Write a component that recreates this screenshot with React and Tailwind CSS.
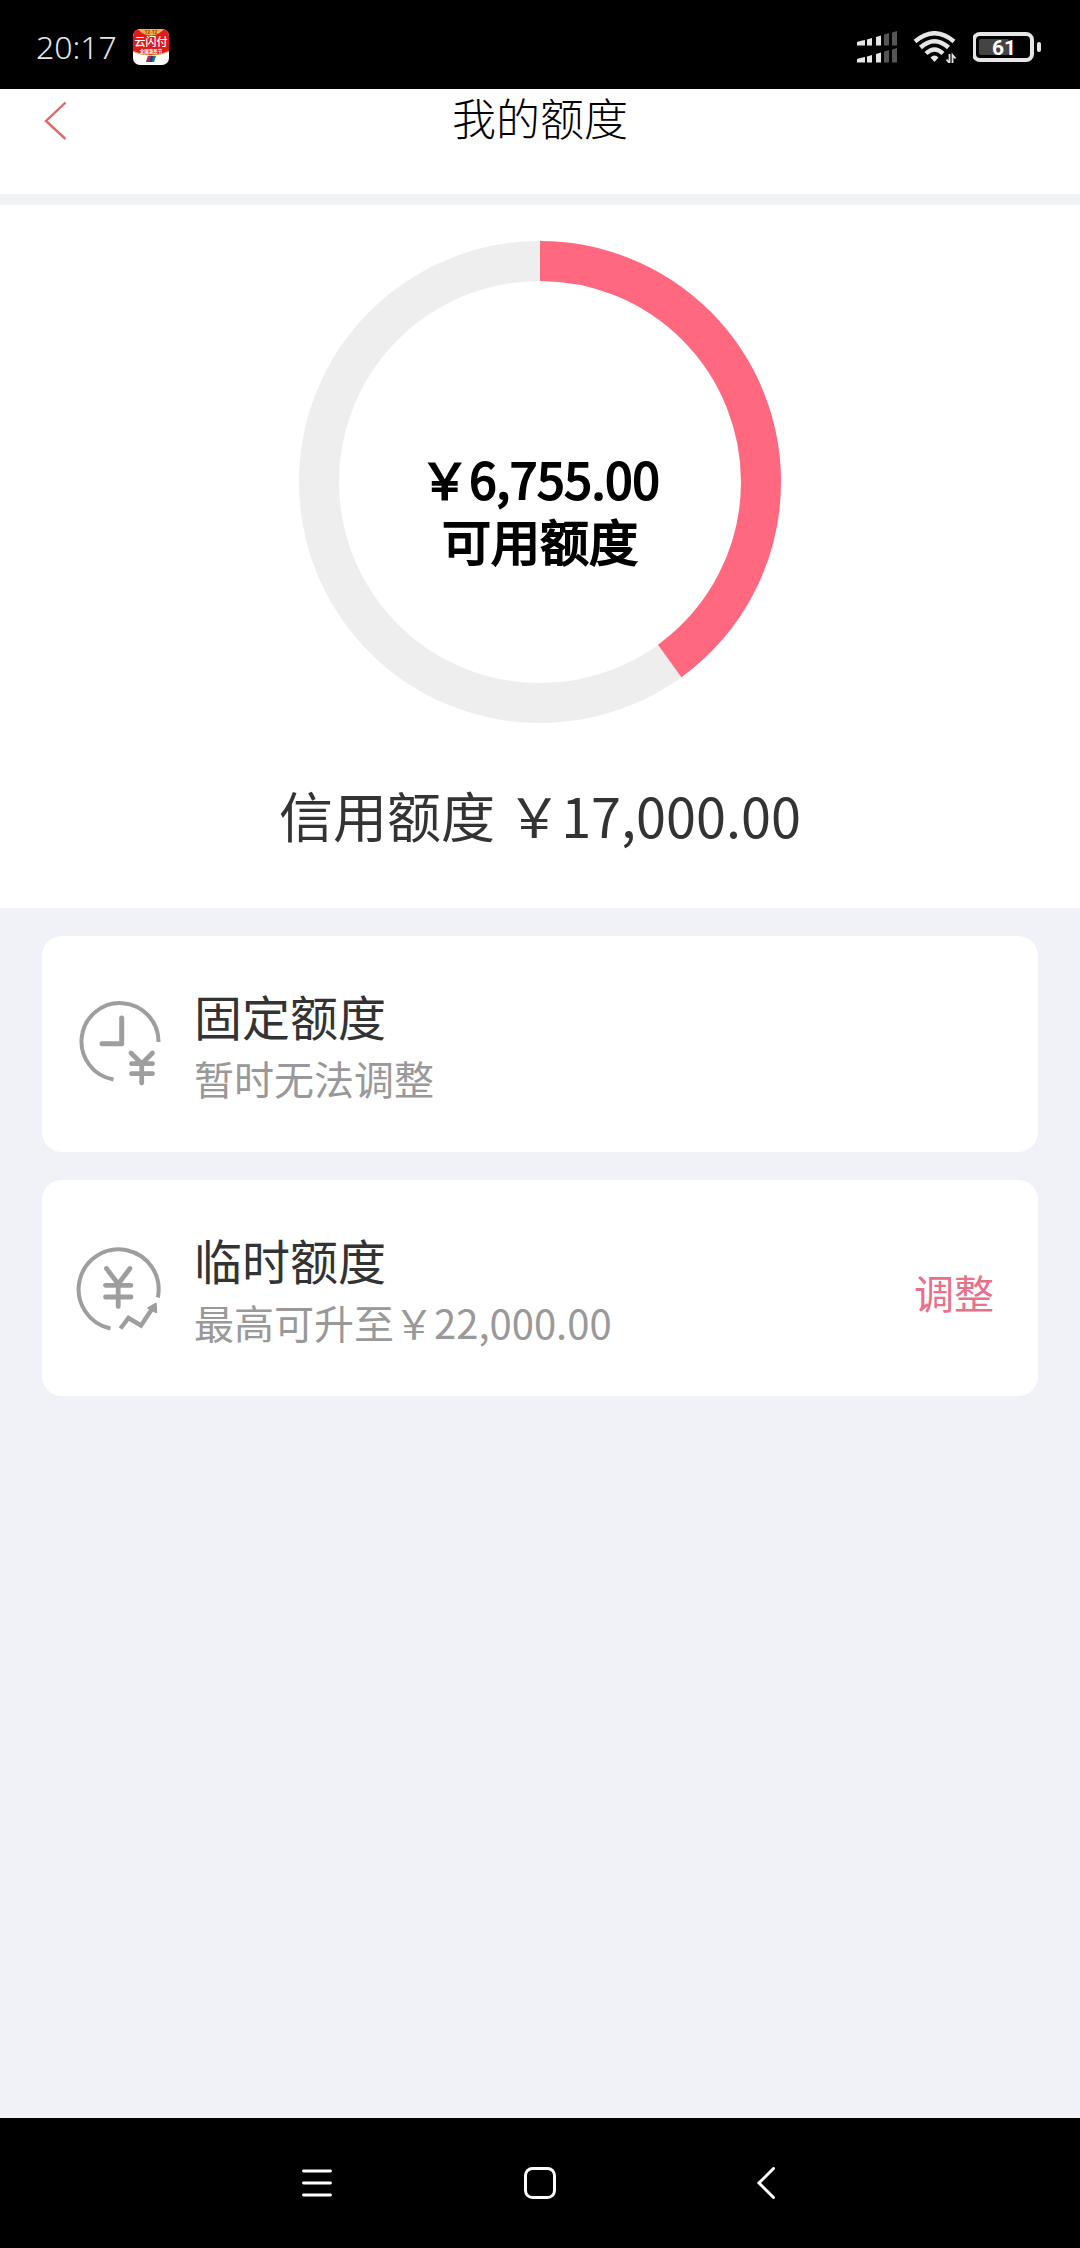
import React from "react";

const USED_SHARE = 0.4;
const RADIUS = 221;
const LENGTH = 2 * Math.PI * RADIUS;

const StatusBar = () => (
  <div className="flex h-[89px] items-center justify-between bg-black pt-1 pr-[37px] pl-9 text-[#e6e6e6]">
    <div className="flex items-center gap-4">
      <span className="font-['Noto_Sans',sans-serif] text-[32px] leading-9 font-light">20:17</span>
      <svg className="size-9" viewBox="0 0 36 36" role="img" aria-label="云闪付">
        <clipPath id="appClip">
          <rect width="36" height="36" rx="7" />
        </clipPath>
        <g clipPath="url(#appClip)">
          <rect width="36" height="36" fill="#fff" />
          <path d="M0 0h36v22q-18 8-36 0z" fill="#e01b1b" />
          <path d="M5 0h26q-5 6-13 6.500Q9 6 5 0z" fill="#f5b04a" />
          <path d="M0 22.500q18 7.500 36 0" fill="none" stroke="#d9a441" strokeWidth="1" />
          <path d="M15 27h8l-2 6h-8z" fill="#0b7f86" />
          <path d="M15 27h3l-2 6h-3z" fill="#c4274a" />
          <path d="M18 27h2.500l-2 6H16z" fill="#23407c" />
          <text x="18" y="5" textAnchor="middle" fontSize="5" fontWeight="700" fill="#8a3a10" fontFamily="Roboto, sans-serif">12·12</text>
          <text x="18" y="17" textAnchor="middle" fontSize="11" fontWeight="500" fill="#fff" fontFamily="Noto Sans CJK SC, sans-serif">云闪付</text>
          <text x="18" y="23.500" textAnchor="middle" fontSize="4.500" fontWeight="700" fill="#fff" fontFamily="Noto Sans CJK SC, sans-serif">全国惠民节</text>
        </g>
      </svg>
    </div>
    <div className="flex items-center gap-4">
      <svg className="h-8 w-10" viewBox="0 0 40 32" role="img" aria-label="信号">
        <g fill="#e6e6e6">
          <path d="M0 11q4-1.500 8-2v5.500H0zM10 8.500l5-1.500v7.500h-5zM19 6l5-1.500v10h-5z" />
          <path d="M0 28q4-1.500 8-2v5.500H0zM10 25.500l5-1.500v7.500h-5zM19 23l5-1.500v10h-5z" />
        </g>
        <g fill="#555">
          <path d="M27 3.500l5-1.500v12.500h-5zM35 1.500L40 0v14.500h-5z" />
          <path d="M27 20.500l5-1.500v12.500h-5zM35 18.500l5-1.500v14.500h-5z" />
        </g>
      </svg>
      <svg className="h-8 w-11" viewBox="0 0 44 32" role="img" aria-label="Wi-Fi">
        <g fill="none" stroke="#e6e6e6" strokeWidth="4.400">
          <path d="M2 10.500Q21.500 -6 41 10.500" />
          <path d="M7.500 16.500Q21.500 4 35.500 16.500" />
          <path d="M13 22.500Q21.500 14.500 30 22.500" />
        </g>
        <path d="M17.500 26.500q4-4 8 0l-4 4.500z" fill="#e6e6e6" />
        <path d="M36.500 23v9l-3-3.500M39.500 33v-9l3 3.500" fill="none" stroke="#e6e6e6" strokeWidth="1.800" />
      </svg>
      <svg className="h-8 w-[70px]" viewBox="0 0 70 32" role="img" aria-label="61%">
        <rect x="1" y="3" width="58" height="26" rx="6" fill="none" stroke="#e6e6e6" strokeWidth="4" />
        <rect x="6" y="8" width="30" height="16" rx="2" fill="#444" />
        <rect x="64" y="11" width="4" height="10" rx="2" fill="#e6e6e6" />
        <text x="31" y="23.500" textAnchor="middle" fontSize="21" fontWeight="700" fill="#fff" fontFamily="Roboto, sans-serif">61</text>
      </svg>
    </div>
  </div>
);

const Header = () => (
  <header className="grid h-[116px] grid-cols-[1fr_auto_1fr] items-start border-b-[11px] border-[#f0f2f5] bg-white">
    <button type="button" aria-label="返回" className="ml-11 w-6 pt-3">
      <svg className="h-10 w-6" viewBox="0 0 24 40" fill="none" stroke="#e0686b" strokeWidth="2.400">
        <path d="M21.500 1.500L2 20l19.500 18" />
      </svg>
    </button>
    <h1 className="text-[44px] leading-[56px] font-light text-black">我的额度</h1>
  </header>
);

const QuotaRing = () => (
  <div className="relative size-[482px]">
    <svg className="size-full" viewBox="0 0 482 482" fill="none" strokeWidth="40">
      <circle cx="241" cy="241" r={RADIUS} stroke="#eee" />
      <circle
        cx="241"
        cy="241"
        r={RADIUS}
        stroke="#ff687f"
        strokeDasharray={`${LENGTH * USED_SHARE} ${LENGTH}`}
        transform="rotate(-90 241 241)"
      />
    </svg>
    <p className="absolute inset-0 flex items-center justify-center pt-[54px] text-center text-[49px] leading-[62px] text-black [-webkit-text-stroke:2px_black]">
      ￥6,755.00
      <br />
      可用额度
    </p>
  </div>
);

const FixedIcon = () => (
  <svg className="size-[88px] overflow-visible" viewBox="0 0 88 88" fill="none" stroke="#9e9e9e" strokeLinecap="round" strokeLinejoin="round">
    <path d="M84.500 40A38.500 38.500 0 1 0 39.500 77.500" strokeWidth="4" strokeLinecap="butt" />
    <path d="M47.700 16v25.700H28" strokeWidth="5" />
    <path d="M57 51l10.700 10.700L78.500 51M67.700 61.700V81M57.500 61.700h21M57.500 71.700h21" strokeWidth="4.800" />
  </svg>
);

const TempIcon = () => (
  <svg className="size-[88px] overflow-visible" viewBox="0 0 88 88" fill="none" stroke="#9e9e9e" strokeLinecap="round" strokeLinejoin="round">
    <path d="M83.800 51.500A40 40 0 1 0 36.500 82.500" strokeWidth="4" strokeLinecap="butt" />
    <path d="M32.500 22.500l11.700 15.500 11.700-15.500M44.200 38v22.500M31.500 39.300h25.500M31.500 51h25.500" strokeWidth="4.800" />
    <path d="M46.500 82.500l8-10.500 12.500 7.500L79 61.500" strokeWidth="4.400" strokeLinecap="butt" strokeLinejoin="miter" />
    <path d="M82 57.500l.5 9-8.500-4.500z" fill="#9e9e9e" strokeWidth="1.500" />
  </svg>
);

const QuotaCard = ({ icon, title, note, action }) => (
  <section className="flex h-[216px] items-center rounded-[20px] bg-white pt-1 pr-11 pl-8">
    {icon}
    <div className="ml-8 flex-1">
      <h2 className="text-[48px] leading-[64px] text-[#333]">{title}</h2>
      <p className="text-[40px] leading-[62px] text-[#999]">{note}</p>
    </div>
    {action && (
      <button type="button" className="pt-1 text-[40px] leading-[60px] text-[#e8708a]">
        {action}
      </button>
    )}
  </section>
);

const NavBar = () => (
  <nav className="flex h-[130px] items-center justify-center gap-48 bg-black text-white">
    <button type="button" aria-label="最近任务">
      <svg className="size-8" viewBox="0 0 32 32" stroke="currentColor" strokeWidth="2.800" strokeLinecap="round">
        <path d="M3.500 4h27M3.500 16h27M3.500 28h27" />
      </svg>
    </button>
    <button type="button" aria-label="主屏幕">
      <svg className="size-8" viewBox="0 0 32 32" fill="none" stroke="currentColor" strokeWidth="3">
        <rect x="1.500" y="1.500" width="29" height="29" rx="7" />
      </svg>
    </button>
    <button type="button" aria-label="返回">
      <svg className="size-8" viewBox="0 0 32 32" fill="none" stroke="currentColor" strokeWidth="3" strokeLinecap="round">
        <path d="M25.500 1.500L11 16l14.500 14.500" />
      </svg>
    </button>
  </nav>
);

export default function App() {
  return (
    <div className="flex min-h-screen flex-col bg-[#f0f2f7] font-['Noto_Sans_CJK_SC',sans-serif]">
      <StatusBar />
      <Header />
      <main className="flex-1">
        <section className="flex flex-col items-center bg-white pt-9 pb-[53px]">
          <QuotaRing />
          <p className="mt-13 text-[54px] leading-[80px] text-[#333]">信用额度 ￥17,000.00</p>
        </section>
        <div className="flex flex-col gap-7 px-[42px] py-7">
          <QuotaCard icon={<FixedIcon />} title="固定额度" note="暂时无法调整" />
          <QuotaCard icon={<TempIcon />} title="临时额度" note="最高可升至￥22,000.00" action="调整" />
        </div>
      </main>
      <NavBar />
    </div>
  );
}
